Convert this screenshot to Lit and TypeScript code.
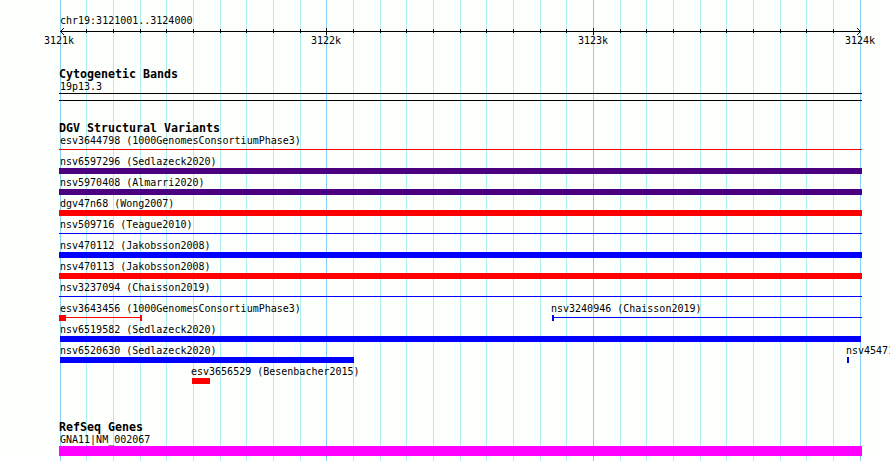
import { LitElement, html, svg, css } from "lit";
import { customElement, property } from "lit/decorators.js";
import { classMap } from "lit/directives/class-map.js";
import { styleMap } from "lit/directives/style-map.js";

interface Feature {
  label: string;
  start: number;
  end: number;
  color: string;
  // "bar" is solid, "line" is a thin span with optional solid blocks on it
  kind: "bar" | "line";
  blocks?: [number, number][];
}

const LEFT = 59;
const RIGHT = 862;
const RED = "#ff0000";
const BLUE = "#0000ff";
const INDIGO = "#4b0082";

const full = (label: string, color: string, kind: "bar" | "line" = "bar"): Feature => ({
  label,
  start: LEFT,
  end: RIGHT,
  color,
  kind,
});

const VARIANTS: Feature[][] = [
  [full("esv3644798 (1000GenomesConsortiumPhase3)", RED, "line")],
  [full("nsv6597296 (Sedlazeck2020)", INDIGO)],
  [full("nsv5970408 (Almarri2020)", INDIGO)],
  [full("dgv47n68 (Wong2007)", RED)],
  [full("nsv509716 (Teague2010)", BLUE, "line")],
  [full("nsv470112 (Jakobsson2008)", BLUE)],
  [full("nsv470113 (Jakobsson2008)", RED)],
  [full("nsv3237094 (Chaisson2019)", BLUE, "line")],
  [
    {
      label: "esv3643456 (1000GenomesConsortiumPhase3)",
      start: 59,
      end: 142,
      color: RED,
      kind: "line",
      blocks: [[59, 66], [140, 142]],
    },
    {
      label: "nsv3240946 (Chaisson2019)",
      start: 552,
      end: RIGHT,
      color: BLUE,
      kind: "line",
      blocks: [[552, 554]],
    },
  ],
  [{ label: "nsv6519582 (Sedlazeck2020)", start: 60, end: 861, color: BLUE, kind: "bar" }],
  [
    { label: "nsv6520630 (Sedlazeck2020)", start: 60, end: 354, color: BLUE, kind: "bar" },
    { label: "nsv45471", start: 847, end: 849, color: BLUE, kind: "bar" },
  ],
  [{ label: "esv3656529 (Besenbacher2015)", start: 192, end: 210, color: RED, kind: "bar" }],
];

const GENES: Feature[][] = [[full("GNA11|NM_002067", "#ff00ff")]];

// 30 minor divisions over 800px, every tenth one is a major
const TICKS = Array.from({ length: 31 }, (_, i) => ({
  x: 60 + Math.floor((i * 80) / 3),
  major: i % 10 === 0,
}));

@customElement("genome-ruler")
class GenomeRuler extends LitElement {
  @property({ type: String })
  region: string = "";

  static styles = css`
    :host {
      display: block;
      height: 68px;
      padding-top: 15px;
      box-sizing: border-box;
    }
    .region {
      height: 11px;
      line-height: 12px;
      padding-left: 60px;
    }
    svg {
      display: block;
    }
    .scale {
      display: flex;
      gap: 237px;
      padding-left: 44px;
      height: 11px;
      line-height: 11px;
      margin-top: -3px;
    }
    .scale span {
      flex: none;
      width: 30px;
    }
  `;

  render() {
    return html`
      <div class="region">${this.region}</div>
      <svg width="890" height="12" viewBox="0 0 890 12" shape-rendering="crispEdges">
        <rect x="60" y="5" width="801" height="1" />
        ${TICKS.filter((t) => t.x > 60 && t.x < 860).map(
          (t) => svg`<rect x=${t.x} y=${t.major ? 2 : 3} width="1" height=${t.major ? 7 : 4} />`
        )}
        <path d="M61 4h1v3h-1z M62 3h1v1h-1z M62 7h1v1h-1z M63 2h1v1h-1z M63 8h1v1h-1z" />
        <path d="M859 4h1v3h-1z M858 3h1v1h-1z M858 7h1v1h-1z M857 2h1v1h-1z M857 8h1v1h-1z" />
      </svg>
      <div class="scale">
        <span>3121k</span><span>3122k</span><span>3123k</span><span>3124k</span>
      </div>
    `;
  }
}

@customElement("feature-track")
class FeatureTrack extends LitElement {
  @property({ type: String })
  heading: string = "";

  @property({ attribute: false })
  rows: Feature[][] = [];

  @property({ type: Boolean, reflect: true })
  tall: boolean = false;

  static styles = css`
    :host {
      display: block;
    }
    h2 {
      margin: 0;
      padding-left: 59px;
      height: 13px;
      font: bold 11.63px/13px "DejaVu Sans Mono", monospace;
    }
    .row {
      display: grid;
      height: 21px;
    }
    .feature {
      grid-area: 1 / 1;
      min-width: 0;
    }
    .label {
      height: 12px;
      line-height: 11px;
      white-space: pre;
    }
    .glyph {
      display: grid;
      align-items: center;
      height: 6px;
    }
    .glyph i {
      grid-area: 1 / 1;
      height: 6px;
    }
    .glyph .thin {
      height: 1px;
      align-self: start;
      margin-top: 2px;
    }
    :host([tall]) .glyph,
    :host([tall]) .glyph i {
      height: 10px;
    }
  `;

  private renderSpan(start: number, end: number, color: string, thin: boolean) {
    return html`<i
      class=${classMap({ thin })}
      style=${styleMap({
        marginLeft: `${start}px`,
        width: `${end - start}px`,
        background: color,
      })}
    ></i>`;
  }

  private renderFeature(f: Feature) {
    const labelX = Math.max(60, f.start - 1);
    return html`
      <div class="feature">
        <div class="label" style=${styleMap({ paddingLeft: `${labelX}px` })}>${f.label}</div>
        <div class="glyph">
          ${this.renderSpan(f.start, f.end, f.color, f.kind === "line")}
          ${(f.blocks ?? []).map(([a, b]) => this.renderSpan(a, b, f.color, false))}
        </div>
      </div>
    `;
  }

  render() {
    return html`
      <h2>${this.heading}</h2>
      ${this.rows.map((row) => html`<div class="row">${row.map((f) => this.renderFeature(f))}</div>`)}
      <slot></slot>
    `;
  }
}

@customElement("app-root")
class AppRoot extends LitElement {
  static styles = css`
    :host {
      display: grid;
      width: 890px;
      height: 461px;
      overflow: hidden;
      background: #fdfffc;
      color: #000;
      font: 10px/11px "DejaVu Sans Mono", monospace;
    }
    .grid,
    .tracks {
      grid-area: 1 / 1;
      min-width: 0;
    }
    .grid {
      display: block;
    }
    .minor {
      fill: #afeeee;
    }
    .major {
      fill: #87cefa;
    }
    .cyto {
      height: 54px;
    }
    .band-label {
      height: 12px;
      padding-left: 60px;
    }
    .band {
      width: 803px;
      height: 8px;
      box-sizing: border-box;
      margin-left: 59px;
      border: solid #000;
      border-width: 1px 0;
    }
    .variants {
      height: 299px;
    }
  `;

  render() {
    return html`
      <svg class="grid" width="890" height="461" shape-rendering="crispEdges">
        ${TICKS.map(
          (t) => svg`<rect class=${t.major ? "major" : "minor"} x=${t.x} y="0" width="1" height="461" />`
        )}
      </svg>
      <div class="tracks">
        <genome-ruler region="chr19:3121001..3124000"></genome-ruler>
        <feature-track class="cyto" heading="Cytogenetic Bands">
          <div class="band-label">19p13.3</div>
          <div class="band"></div>
        </feature-track>
        <feature-track class="variants" heading="DGV Structural Variants" .rows=${VARIANTS}></feature-track>
        <feature-track tall heading="RefSeq Genes" .rows=${GENES}></feature-track>
      </div>
    `;
  }
}

export default AppRoot;
